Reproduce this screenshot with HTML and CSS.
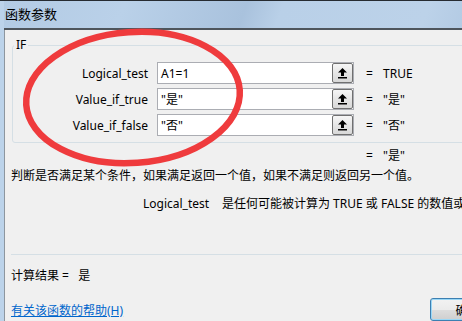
FILE: index.html
```html
<!DOCTYPE html>
<html lang="zh-CN">

<head>
    <meta charset="UTF-8">
    <meta name="viewport" content="width=device-width, initial-scale=1.0">
    <title>函数参数</title>
    <link rel="stylesheet" href="styles.css">
</head>

<body>
    <div class="window">
        <!-- Title bar -->
        <div class="titlebar">函数参数</div>

        <div class="client">
            <!-- Arguments group -->
            <fieldset class="group">
                <legend>IF</legend>

                <div class="arg-row">
                    <label class="arg-name">Logical_test</label>
                    <div class="arg-box">
                        <span class="arg-input">A1=1</span>
                        <button class="ref-btn">
                            <svg width="11" height="12" viewBox="0 0 11 12"><path d="M5.5 1 L10 5.5 L7 5.5 L7 9 L4 9 L4 5.5 L1 5.5 Z" fill="#000"/><rect x="1" y="10" width="9" height="1.5" fill="#000"/></svg>
                        </button>
                    </div>
                    <span class="eq">=</span>
                    <span class="arg-value">TRUE</span>
                </div>

                <div class="arg-row">
                    <label class="arg-name">Value_if_true</label>
                    <div class="arg-box">
                        <span class="arg-input">"是"</span>
                        <button class="ref-btn">
                            <svg width="11" height="12" viewBox="0 0 11 12"><path d="M5.5 1 L10 5.5 L7 5.5 L7 9 L4 9 L4 5.5 L1 5.5 Z" fill="#000"/><rect x="1" y="10" width="9" height="1.5" fill="#000"/></svg>
                        </button>
                    </div>
                    <span class="eq">=</span>
                    <span class="arg-value">"是"</span>
                </div>

                <div class="arg-row">
                    <label class="arg-name">Value_if_false</label>
                    <div class="arg-box">
                        <span class="arg-input">"否"</span>
                        <button class="ref-btn">
                            <svg width="11" height="12" viewBox="0 0 11 12"><path d="M5.5 1 L10 5.5 L7 5.5 L7 9 L4 9 L4 5.5 L1 5.5 Z" fill="#000"/><rect x="1" y="10" width="9" height="1.5" fill="#000"/></svg>
                        </button>
                    </div>
                    <span class="eq">=</span>
                    <span class="arg-value">"否"</span>
                </div>
            </fieldset>

            <!-- Function result -->
            <div class="result-row"><span class="eq">=</span><span>"是"</span></div>

            <p class="desc">判断是否满足某个条件，如果满足返回一个值，如果不满足则返回另一个值。</p>

            <p class="arg-desc">
                <span class="arg-desc-name">Logical_test</span>
                <span class="arg-desc-text">是任何可能被计算为 TRUE 或 FALSE 的数值或表达式。</span>
            </p>

            <hr class="sep">

            <div class="calc">计算结果 =&nbsp;&nbsp;&nbsp;是</div>

            <div class="footer">
                <a href="#" class="help">有关该函数的帮助(H)</a>
                <button class="dlg-btn ok">确定</button>
                <button class="dlg-btn">取消</button>
            </div>
        </div>

        <!-- Red marker drawn over the dialog -->
        <svg class="marker" width="260" height="170" viewBox="0 0 260 170">
            <ellipse cx="133" cy="96.5" rx="107" ry="65.5" transform="rotate(-4 133 96.5)" fill="none" stroke="#ef3b3d" stroke-width="6.5"/>
        </svg>
    </div>
</body>

</html>
```

FILE: styles.css
```css
body {
    margin: 0;
    padding: 0;
    width: 462px;
    height: 321px;
    overflow: hidden;
    background-color: #f0f0f0;
    font-family: "Noto Sans", "Noto Sans CJK SC", sans-serif;
    font-size: 12px;
    color: #000;
}

.window {
    position: relative;
    width: 600px;
    height: 340px;
    border-top: 1px solid #262b31;
    padding-left: 4px;
    background-color: #bcd3ea;
}

.titlebar {
    height: 27px;
    line-height: 27px;
    padding-left: 1px;
    border-bottom: 2px solid #4e555c;
    background: linear-gradient(110deg, #b3cbe4 0%, #bad1e9 20%, #a9c2dd 40%, #b9d0e8 46%, #bcd2e9 70%, #aac3de 84%, #b8cfe7 100%);
    font-size: 13px;
}

.client {
    height: 320px;
    border-left: 1px solid #8d969f;
    background-color: #f0f0f0;
    padding-top: 7px;
}

/* Group box */
.group {
    margin: 0 0 0 7px;
    padding: 9px 0 6px 0;
    width: 520px;
    border: 1px solid #d5dfe5;
    border-radius: 3px;
}

.group legend {
    margin-left: 1px;
    padding: 0 2px;
    line-height: 16px;
}

.arg-row {
    display: flex;
    align-items: center;
    height: 22px;
    margin-bottom: 4px;
}

.arg-row:last-child {
    margin-bottom: 0;
}

.arg-name {
    width: 135px;
    text-align: right;
}

.arg-box {
    display: flex;
    align-items: center;
    justify-content: space-between;
    box-sizing: border-box;
    width: 197px;
    height: 22px;
    margin-left: 9px;
    border: 1px solid #abadb3;
    background-color: #fff;
}

.arg-input {
    padding-left: 3px;
}

.ref-btn {
    display: flex;
    align-items: center;
    justify-content: center;
    box-sizing: border-box;
    width: 21px;
    height: 20px;
    margin: 0;
    padding: 0;
    border: 1px solid #707070;
    border-radius: 2px;
    background: linear-gradient(#f6f6f6, #e6e6e6 50%, #d8d8d8);
}

.eq {
    display: inline-block;
    width: 17px;
}

.arg-row .eq {
    margin-left: 12px;
}

.result-row {
    margin-top: 5px;
    padding-left: 361px;
    line-height: 16px;
}

.desc {
    margin: 4px 0 0 6px;
    line-height: 16px;
    white-space: nowrap;
}

.arg-desc {
    margin: 12px 0 0 138px;
    line-height: 16px;
    white-space: nowrap;
    display: flex;
}

.arg-desc-name {
    width: 79px;
}

.sep {
    margin: 42px 0 0 6px;
    border: none;
    border-top: 1px solid #d5dfe5;
    height: 0;
}

.calc {
    margin: 13px 0 0 6px;
    line-height: 16px;
}

.footer {
    display: flex;
    align-items: center;
    margin: 14px 0 0 6px;
    height: 23px;
}

.help {
    color: #0066cc;
    text-decoration: underline;
}

.dlg-btn {
    width: 75px;
    height: 23px;
    margin-left: 6px;
    border: 1px solid #707070;
    border-radius: 3px;
    background: linear-gradient(#f2f2f2, #ebebeb 50%, #dddddd 51%, #cfcfcf);
    font-family: "Noto Sans CJK SC", sans-serif;
    font-size: 12px;
}

.dlg-btn.ok {
    margin-left: 307px;
    border-color: #3c7fb1;
    box-shadow: inset 0 0 0 1px #9ad7f6;
}

.marker {
    position: absolute;
    left: 0;
    top: 0;
    pointer-events: none;
}
```
